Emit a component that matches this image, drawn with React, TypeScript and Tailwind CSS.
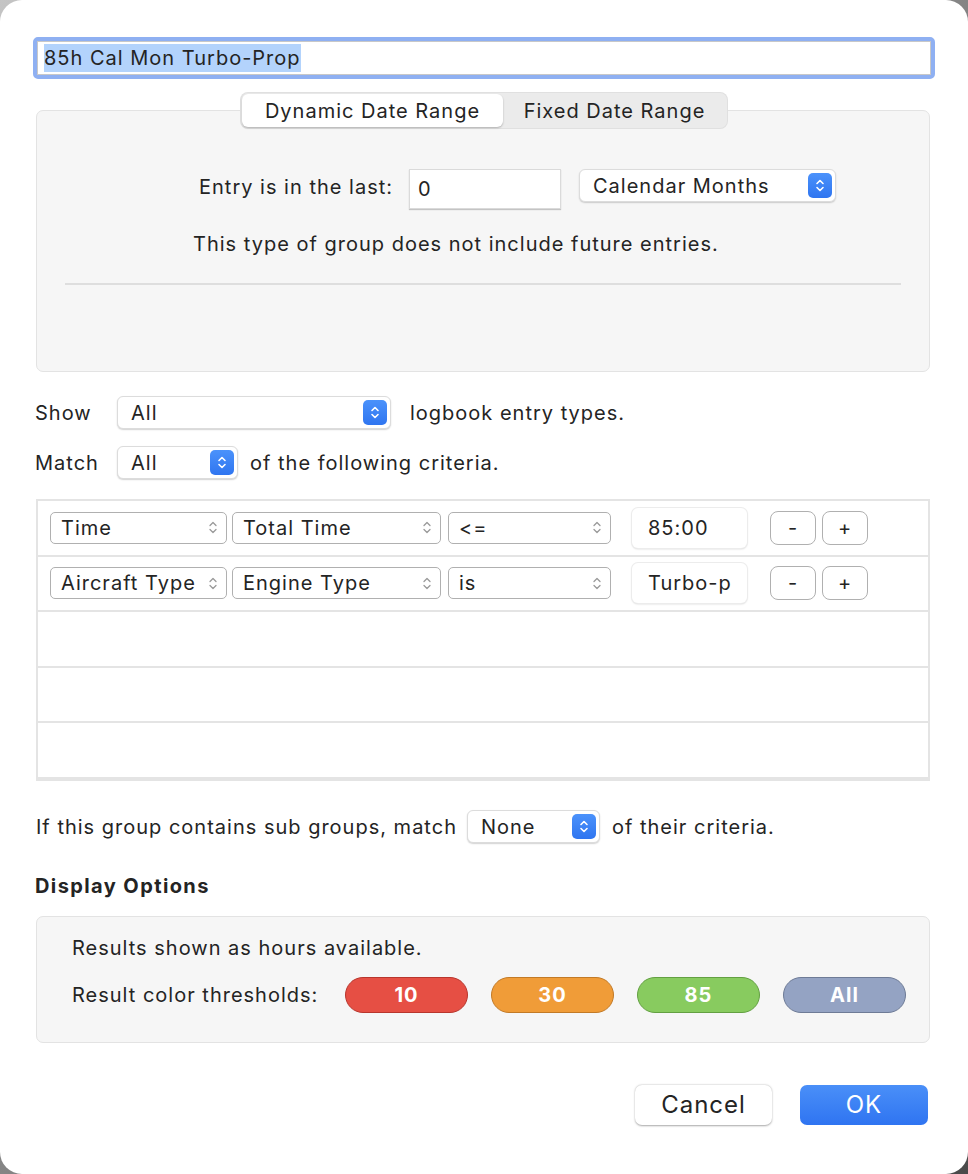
import React from "react";

const font = { fontFamily: "Inter, 'Noto Sans', sans-serif" };

function BlueStepper() {
  return (
    <div className="flex h-[25px] w-[24px] items-center justify-center rounded-[5px] bg-gradient-to-b from-[#4b92fb] to-[#2f75f0]">
      <svg width="10" height="17" viewBox="0 0 10 17" fill="none">
        <path d="M2 6.5 L5 3.5 L8 6.5" stroke="white" strokeWidth="1.6" strokeLinecap="round" strokeLinejoin="round" />
        <path d="M2 10.5 L5 13.5 L8 10.5" stroke="white" strokeWidth="1.6" strokeLinecap="round" strokeLinejoin="round" />
      </svg>
    </div>
  );
}

function GrayChevrons() {
  return (
    <svg width="10" height="17" viewBox="0 0 10 17" fill="none">
      <path d="M2 6.5 L5 3.5 L8 6.5" stroke="#9a9a9a" strokeWidth="1.3" strokeLinecap="round" strokeLinejoin="round" />
      <path d="M2 10.5 L5 13.5 L8 10.5" stroke="#9a9a9a" strokeWidth="1.3" strokeLinecap="round" strokeLinejoin="round" />
    </svg>
  );
}

function Popup({ label, width }: { label: string; width: string }) {
  return (
    <div
      className={`flex h-[33px] ${width} items-center justify-between rounded-[6px] border border-[#dcdcdc] bg-white pl-[13px] pr-[3px] shadow-[0_1px_1.5px_rgba(0,0,0,0.18)]`}
    >
      <span>{label}</span>
      <BlueStepper />
    </div>
  );
}

function RowPopup({ label, width }: { label: string; width: string }) {
  return (
    <div
      className={`flex h-[32px] ${width} items-center justify-between rounded-[5px] border border-[#b0b0b0] bg-white pl-[10px] pr-[8px]`}
    >
      <span>{label}</span>
      <GrayChevrons />
    </div>
  );
}

function SmallButton({ label }: { label: string }) {
  return (
    <div className="flex h-[34px] w-[46px] items-center justify-center rounded-[8px] border border-[#b0b0b0] bg-white text-[20px]">
      {label}
    </div>
  );
}

function CriteriaRow({ a, b, c, value }: { a: string; b: string; c: string; value: string }) {
  return (
    <div className="flex h-[56px] items-center border-b-2 border-[#e4e4e4] pl-[12px]">
      <RowPopup label={a} width="w-[177px]" />
      <div className="ml-[5px]">
        <RowPopup label={b} width="w-[209px]" />
      </div>
      <div className="ml-[7px]">
        <RowPopup label={c} width="w-[163px]" />
      </div>
      <div className="ml-[21px] flex h-[40px] w-[115px] items-center rounded-[6px] bg-white pl-[16px] shadow-[0_1px_2px_rgba(0,0,0,0.22)] ring-1 ring-[#ececec]">
        {value}
      </div>
      <div className="ml-[23px] flex gap-[6px]">
        <SmallButton label="-" />
        <SmallButton label="+" />
      </div>
    </div>
  );
}

function Pill({ label, color }: { label: string; color: string }) {
  return (
    <div className={`flex h-[36px] w-[123px] items-center justify-center rounded-full border font-bold text-white ${color}`}>
      {label}
    </div>
  );
}

export default function App() {
  return (
    <div className="h-[1174px] w-[968px] bg-gradient-to-br from-[#c4c4c4] to-[#4a4a4a]" style={font}>
      <div className="flex h-full w-full flex-col rounded-[22px] bg-white text-[20px] tracking-[1px] text-[#242424]">
        {/* title field */}
        <div className="mx-[33px] mt-[37px] h-[42px] rounded-[5px] border-[4px] border-[#8fb0f2] bg-white">
          <div className="flex h-full items-center border border-[#c8c8c8] pl-[6px]">
            <span className="bg-[#b3d3fc] leading-[28px]">85h Cal Mon Turbo-Prop</span>
          </div>
        </div>

        {/* tabs */}
        <div className="relative z-10 mt-[14px] flex justify-center">
          <div className="flex h-[35px] rounded-[7px] bg-[#ebebeb] p-[1px] ring-1 ring-[#e0e0e0]">
            <div className="flex w-[261px] items-center justify-center rounded-[6px] bg-white shadow-[0_1px_2px_rgba(0,0,0,0.25)]">
              Dynamic Date Range
            </div>
            <div className="flex w-[223px] items-center justify-center">Fixed Date Range</div>
          </div>
        </div>

        {/* date range box */}
        <div className="-mt-[18px] ml-[36px] mr-[38px] h-[262px] rounded-[7px] border border-[#e3e3e3] bg-[#f6f6f6]">
          <div className="mt-[58px] flex items-start">
            <div className="w-[356px] pt-[3px] text-right">Entry is in the last:</div>
            <div className="ml-[16px] flex h-[40px] w-[152px] items-center border border-[#dadada] bg-white pl-[8px] shadow-[0_1px_1px_rgba(0,0,0,0.2)]">
              0
            </div>
            <div className="ml-[18px]">
              <Popup label="Calendar Months" width="w-[257px]" />
            </div>
          </div>
          <div className="mt-[20px] pl-[156px]">This type of group does not include future entries.</div>
          <div className="mx-[28px] mt-[24px] h-[2px] bg-[#dedede]" />
        </div>

        {/* show / match */}
        <div className="mt-[24px] flex items-center pl-[35px]">
          <div className="w-[82px]">Show</div>
          <Popup label="All" width="w-[274px]" />
          <div className="ml-[19px]">logbook entry types.</div>
        </div>
        <div className="mt-[17px] flex items-center pl-[35px]">
          <div className="w-[82px]">Match</div>
          <Popup label="All" width="w-[121px]" />
          <div className="ml-[12px]">of the following criteria.</div>
        </div>

        {/* criteria table */}
        <div className="ml-[36px] mr-[38px] mt-[20px] flex h-[282px] flex-col border-2 border-[#e4e4e4] bg-white">
          <CriteriaRow a="Time" b="Total Time" c="<=" value="85:00" />
          <CriteriaRow a="Aircraft Type" b="Engine Type" c="is" value="Turbo-p" />
          <div className="h-[56px] border-b-2 border-[#e4e4e4]" />
          <div className="h-[56px] border-b-2 border-[#e4e4e4]" />
          <div className="h-[56px] border-b-2 border-[#e4e4e4]" />
        </div>

        {/* sub groups */}
        <div className="mt-[29px] flex items-center pl-[36px]">
          <div>If this group contains sub groups, match</div>
          <div className="ml-[10px]">
            <Popup label="None" width="w-[133px]" />
          </div>
          <div className="ml-[12px]">of their criteria.</div>
        </div>

        <div className="mt-[28px] pl-[35px] font-bold tracking-[1.4px]">Display Options</div>

        {/* display options box */}
        <div className="ml-[36px] mr-[38px] mt-[15px] flex h-[127px] flex-col rounded-[7px] border border-[#e3e3e3] bg-[#f6f6f6] pl-[35px]">
          <div className="mt-[16px]">Results shown as hours available.</div>
          <div className="mt-[14px] flex items-center">
            <div className="w-[273px]">Result color thresholds:</div>
            <div className="flex gap-[23px]">
              <Pill label="10" color="bg-[#e64f44] border-[#b8362d]" />
              <Pill label="30" color="bg-[#f09c38] border-[#c27a27]" />
              <Pill label="85" color="bg-[#88cb5f] border-[#63a042]" />
              <Pill label="All" color="bg-[#94a3c3] border-[#6e7b96]" />
            </div>
          </div>
        </div>

        {/* buttons */}
        <div className="mt-[42px] flex justify-end gap-[28px] pr-[40px]">
          <div className="flex h-[40px] w-[137px] items-center justify-center rounded-[7px] bg-white text-[24px] shadow-[0_0.5px_2px_rgba(0,0,0,0.35)]">
            Cancel
          </div>
          <div className="flex h-[40px] w-[128px] items-center justify-center rounded-[7px] bg-gradient-to-b from-[#4a8ff8] to-[#2f74f1] text-[24px] text-white">
            OK
          </div>
        </div>
      </div>
    </div>
  );
}
